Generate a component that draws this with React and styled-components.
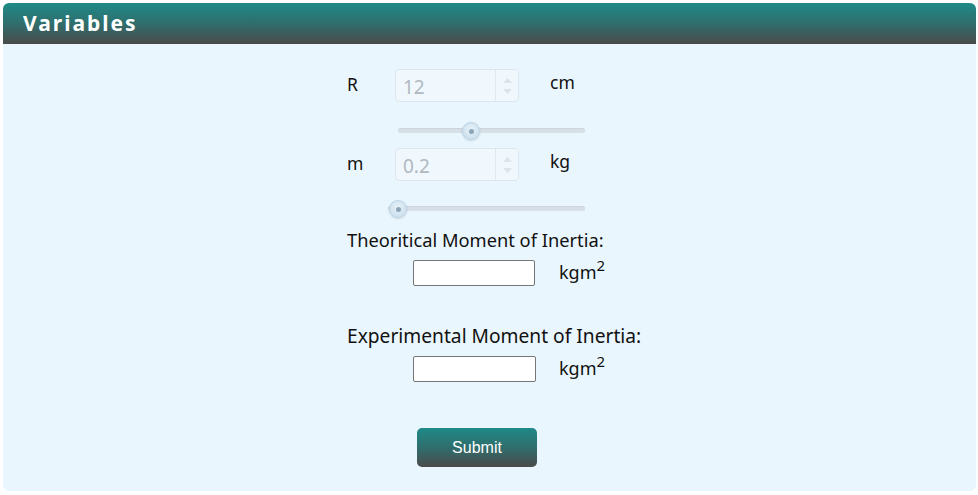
import React from "react";
import styled, { createGlobalStyle } from "styled-components";

const Global = createGlobalStyle`
  html, body { margin: 0; padding: 0; background: #ffffff; }
  body { font-family: "Noto Sans", "Open Sans", sans-serif; }
`;

const Panel = styled.div`
  margin: 3px 2px 0 3px;
  height: 488px;
  border-radius: 6px;
  background: #eaf6fd;
  overflow: hidden;
`;

const Header = styled.div`
  height: 41px;
  background: linear-gradient(to bottom, #1e8a88 0%, #2f6e6d 50%, #4a4a4a 100%);
  color: #ffffff;
  font-family: "Noto Sans", sans-serif;
  font-weight: 700;
  font-size: 21px;
  letter-spacing: 2px;
  line-height: 40px;
  padding-left: 20px;
`;

const Column = styled.div`
  width: 300px;
  margin: 0 auto;
  padding-left: 15px;
  display: flex;
  flex-direction: column;
  color: #111;
  font-size: 17.5px;
`;

const VarRow = styled.div`
  display: flex;
  align-items: flex-start;
  margin-top: ${(p) => p.$top}px;
  height: 33px;
`;

const VarLabel = styled.div`
  width: 48px;
  line-height: 30px;
`;

const NumBox = styled.div`
  width: 124px;
  height: 33px;
  box-sizing: border-box;
  border: 1px solid #dce6ee;
  border-radius: 4px;
  background: #f0f8fd;
  display: flex;
  align-items: stretch;
`;

const NumValue = styled.div`
  flex: 1;
  padding-left: 7px;
  font-size: 19px;
  line-height: 34px;
  color: #b0b8c0;
`;

const Spin = styled.div`
  width: 22px;
  border-left: 1px solid #e0e8ee;
  display: flex;
  flex-direction: column;
  align-items: center;
  justify-content: center;
  gap: 6px;
`;

const Unit = styled.div`
  margin-left: 31px;
  line-height: 26px;
`;

const SliderWrap = styled.div`
  position: relative;
  margin-top: ${(p) => p.$top}px;
  margin-left: ${(p) => p.$left}px;
  width: ${(p) => p.$width}px;
  height: 18px;
`;

const Track = styled.div`
  position: absolute;
  left: 0;
  right: 0;
  top: 6px;
  height: 5px;
  border-radius: 3px;
  background: #d8e0e7;
  box-shadow: inset 0 1px 1px rgba(0, 0, 0, 0.06);
`;

const Thumb = styled.div`
  position: absolute;
  top: 0;
  width: 18px;
  height: 18px;
  margin-left: -9px;
  border-radius: 50%;
  box-sizing: border-box;
  border: 1px solid #bcd4e4;
  background: radial-gradient(circle at 50% 40%, #e6f1f8 0%, #cfe2ef 70%, #bcd3e3 100%);
  box-shadow: 0 1px 2px rgba(80, 110, 140, 0.25);
  &::after {
    content: "";
    position: absolute;
    left: 6px;
    top: 6px;
    width: 5px;
    height: 5px;
    border-radius: 50%;
    background: #8ea5b7;
  }
`;

const Title = styled.div`
  margin-top: ${(p) => p.$top}px;
  font-size: ${(p) => p.$size}px;
  line-height: 24px;
  white-space: nowrap;
`;

const AnswerRow = styled.div`
  display: flex;
  align-items: flex-start;
  margin-top: ${(p) => p.$top}px;
  padding-left: 66px;
`;

const AnswerInput = styled.input`
  width: ${(p) => p.$w}px;
  height: 26px;
  box-sizing: border-box;
  border: 1px solid #767676;
  border-radius: 2px;
  background: #fff;
  margin: 0;
  padding: 0;
`;

const UnitSup = styled.div`
  margin-left: ${(p) => p.$gap}px;
  line-height: 24px;
  font-size: 18px;
  sup {
    font-size: 15px;
    position: relative;
    top: -1px;
    vertical-align: super;
    line-height: 0;
  }
`;

const Submit = styled.button`
  align-self: flex-start;
  margin-top: 46px;
  margin-left: 70px;
  width: 120px;
  height: 39px;
  border: none;
  border-radius: 5px;
  background: linear-gradient(to bottom, #1e8a88 0%, #2f6e6d 50%, #4a4a4a 100%);
  color: #fff;
  font-family: "Liberation Sans", Arial, sans-serif;
  font-size: 16px;
  padding: 0;
`;

const Arrow = ({ up }) => (
  <svg width="9" height="5" viewBox="0 0 9 5">
    <path d={up ? "M0 5 L4.5 0 L9 5 Z" : "M0 0 L4.5 5 L9 0 Z"} fill="#dde3e8" />
  </svg>
);

const NumberField = ({ value }) => (
  <NumBox>
    <NumValue>{value}</NumValue>
    <Spin>
      <Arrow up />
      <Arrow />
    </Spin>
  </NumBox>
);

export default function App() {
  return (
    <>
      <Global />
      <Panel>
        <Header>Variables</Header>
        <Column>
          <VarRow $top={25}>
            <VarLabel>R</VarLabel>
            <NumberField value="12" />
            <Unit>cm</Unit>
          </VarRow>
          <SliderWrap $top={20} $left={51} $width={187}>
            <Track />
            <Thumb style={{ left: "39%" }} />
          </SliderWrap>
          <VarRow $top={8}>
            <VarLabel>m</VarLabel>
            <NumberField value="0.2" />
            <Unit>kg</Unit>
          </VarRow>
          <SliderWrap $top={19} $left={41} $width={197}>
            <Track />
            <Thumb style={{ left: "5%" }} />
          </SliderWrap>
          <Title $top={10} $size={18.3}>Theoritical Moment of Inertia:</Title>
          <AnswerRow $top={8}>
            <AnswerInput $w={122} type="text" />
            <UnitSup $gap={24}>kgm<sup>2</sup></UnitSup>
          </AnswerRow>
          <Title $top={38} $size={19.2}>Experimental Moment of Inertia:</Title>
          <AnswerRow $top={8}>
            <AnswerInput $w={123} type="text" />
            <UnitSup $gap={23}>kgm<sup>2</sup></UnitSup>
          </AnswerRow>
          <Submit>Submit</Submit>
        </Column>
      </Panel>
    </>
  );
}
